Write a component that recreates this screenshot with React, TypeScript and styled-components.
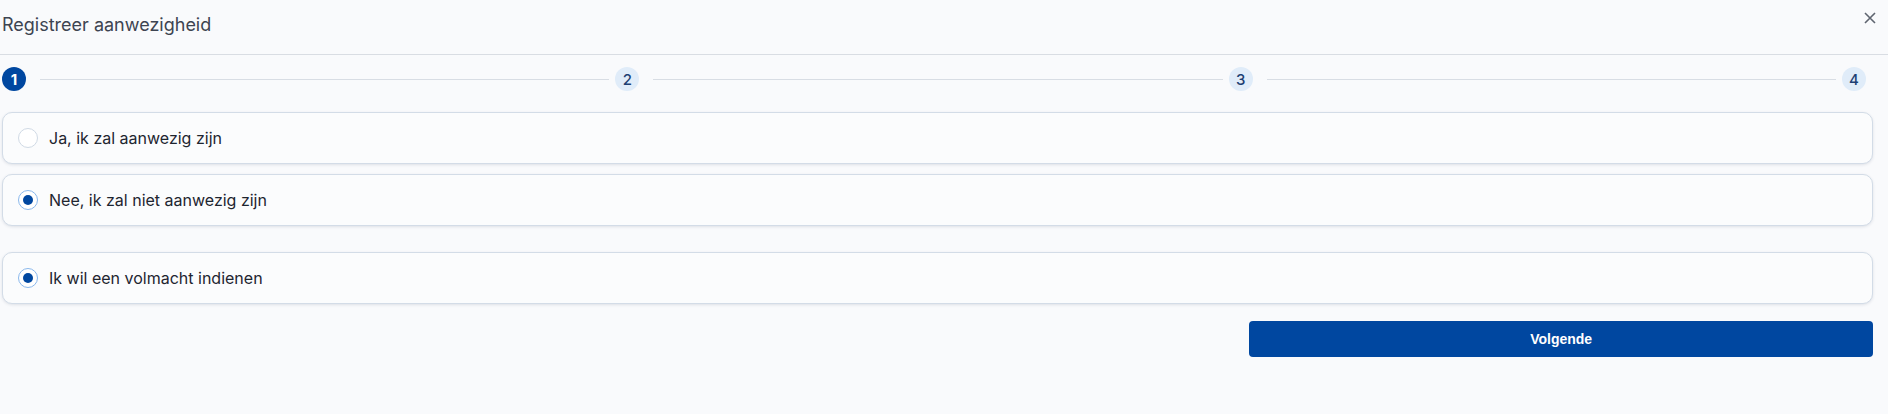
import { Fragment, useState } from 'react'
import styled, { createGlobalStyle } from 'styled-components'

const GlobalStyle = createGlobalStyle`
	html, body {
		margin: 0;
		padding: 0;
		background: #f9fafc;
	}
	body {
		font-family: Inter, 'Noto Sans', sans-serif;
		color: #1e2530;
	}
`

const Page = styled.div`
	width: 1888px;
	min-height: 414px;
	background: #f9fafc;
`

const Header = styled.div`
	display: flex;
	justify-content: space-between;
	align-items: flex-start;
	height: 55px;
	padding: 14px 12px 0 2px;
	box-sizing: border-box;
	border-bottom: 1px solid #d9dde3;
`

const Title = styled.h2`
	margin: 0;
	font-size: 18px;
	font-weight: 400;
	color: #3d4451;
	line-height: 22px;
`

const CloseButton = styled.button`
	display: flex;
	margin-top: -2px;
	padding: 0;
	border: 0;
	background: none;
	color: #5f6570;
	cursor: pointer;
`

const Body = styled.div`
	padding: 12px 15px 0 2px;
`

const Stepper = styled.div`
	display: flex;
	align-items: center;
	padding-right: 7px;
	height: 24px;
`

const StepDot = styled.div<{ $active?: boolean }>`
	flex: none;
	width: 24px;
	height: 24px;
	border-radius: 50%;
	display: flex;
	align-items: center;
	justify-content: center;
	font-size: 15px;
	font-weight: ${(p) => (p.$active ? 700 : 500)};
	background: ${(p) => (p.$active ? '#0047a0' : '#e0ecf9')};
	color: ${(p) => (p.$active ? '#ffffff' : '#1d3f73')};
`

const StepLine = styled.div`
	flex: 1;
	height: 1px;
	margin: 0 6px 0 14px;
	background: #d8dde4;
`

const Form = styled.div`
	display: flex;
	flex-direction: column;
	gap: 26px;
	margin-top: 21px;
`

const OptionGroup = styled.div`
	display: flex;
	flex-direction: column;
	gap: 10px;
`

const OptionCard = styled.label`
	display: flex;
	align-items: center;
	gap: 11px;
	height: 52px;
	box-sizing: border-box;
	padding: 0 15px;
	border: 1px solid #d3dce7;
	border-radius: 10px;
	background: #fbfcfd;
	box-shadow: 0 1px 3px rgba(30, 50, 80, 0.12);
	font-size: 16px;
	color: #1e2530;
	cursor: pointer;
`

const Radio = styled.span<{ $checked?: boolean }>`
	flex: none;
	width: 20px;
	height: 20px;
	box-sizing: border-box;
	border-radius: 50%;
	border: 1px solid ${(p) => (p.$checked ? '#8ab8ec' : '#d0dae5')};
	background: #ffffff;
	display: flex;
	align-items: center;
	justify-content: center;

	&::after {
		content: '';
		display: ${(p) => (p.$checked ? 'block' : 'none')};
		width: 10px;
		height: 10px;
		border-radius: 50%;
		background: #0047a0;
	}
`

const Actions = styled.div`
	display: grid;
	grid-template-columns: 1fr 1fr 1fr;
	margin-top: 17px;
`

const NextButton = styled.button`
	grid-column: 3;
	height: 36px;
	border: 0;
	border-radius: 4px;
	background: #0047a0;
	color: #ffffff;
	font-family: 'Liberation Sans', Arial, sans-serif;
	font-size: 14px;
	font-weight: 700;
	cursor: pointer;
`

const steps = [1, 2, 3, 4]

export default function App() {
	const [attend, setAttend] = useState<'yes' | 'no'>('no')
	const [proxy, setProxy] = useState(true)

	return (
		<Page>
			<GlobalStyle />
			<Header>
				<Title>Registreer aanwezigheid</Title>
				<CloseButton aria-label="Sluiten">
					<svg width="12" height="12" viewBox="0 0 12 12" fill="none" stroke="currentColor" strokeWidth="1.6">
						<path d="M1 1 L11 11 M11 1 L1 11" />
					</svg>
				</CloseButton>
			</Header>

			<Body>
				<Stepper>
					{steps.map((s, i) => (
						<Fragment key={s}>
							<StepDot $active={s === 1}>{s}</StepDot>
							{i < steps.length - 1 && <StepLine />}
						</Fragment>
					))}
				</Stepper>

				<Form>
					<OptionGroup>
						<OptionCard onClick={() => setAttend('yes')}>
							<Radio $checked={attend === 'yes'} />
							Ja, ik zal aanwezig zijn
						</OptionCard>
						<OptionCard onClick={() => setAttend('no')}>
							<Radio $checked={attend === 'no'} />
							Nee, ik zal niet aanwezig zijn
						</OptionCard>
					</OptionGroup>

					<OptionCard onClick={() => setProxy(!proxy)}>
						<Radio $checked={proxy} />
						Ik wil een volmacht indienen
					</OptionCard>
				</Form>

				<Actions>
					<NextButton>Volgende</NextButton>
				</Actions>
			</Body>
		</Page>
	)
}
